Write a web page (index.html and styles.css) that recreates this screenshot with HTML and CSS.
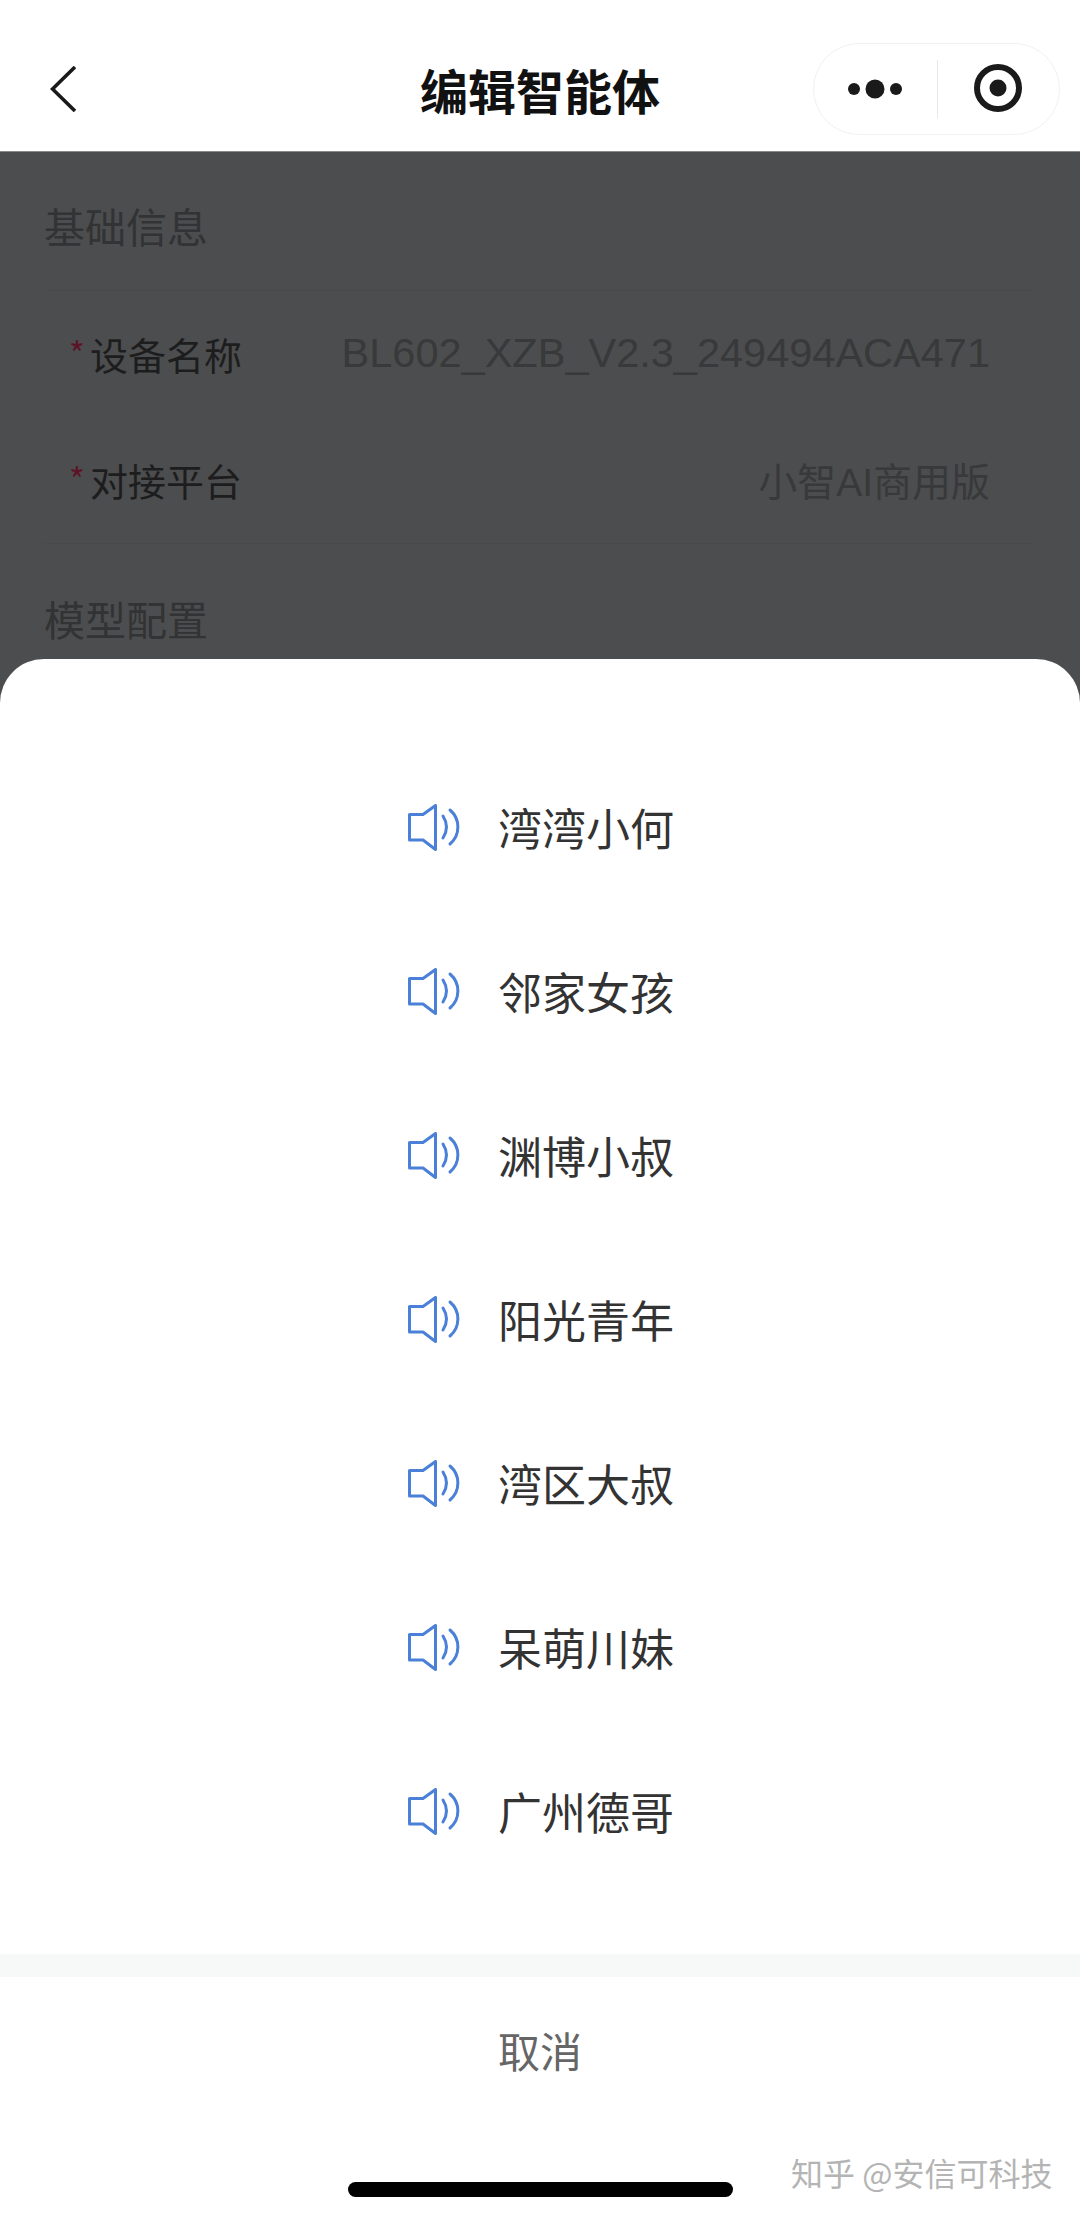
FILE: index.html
```html
<!DOCTYPE html>
<html>
  <head>
    <meta charset="utf-8">
    <title>编辑智能体</title>
    <link rel="stylesheet" href="styles.css">
  </head>
  <body>
    <div class="page">
      <header class="navbar">
        <svg class="back" width="26" height="46" viewBox="0 0 26 46">
          <path d="M25 1 L2.5 23 L25 45" fill="none" stroke="#1a1a1a" stroke-width="3.6"/>
        </svg>
        <div class="title">编辑智能体</div>
        <div class="capsule">
          <svg class="capsule-btn" width="123" height="90" viewBox="0 0 123 90">
            <circle cx="40" cy="45" r="6" fill="#1a1a1a"/>
            <circle cx="61" cy="45" r="9.5" fill="#1a1a1a"/>
            <circle cx="82" cy="45" r="6" fill="#1a1a1a"/>
          </svg>
          <div class="capsule-line"></div>
          <svg class="capsule-btn" width="121" height="90" viewBox="0 0 121 90">
            <circle cx="60" cy="44" r="21" fill="none" stroke="#1a1a1a" stroke-width="6"/>
            <circle cx="60" cy="44" r="8.5" fill="#1a1a1a"/>
          </svg>
        </div>
      </header>

      <main class="form">
        <div class="section-title">基础信息</div>
        <div class="card">
          <div class="row">
            <span class="star">*</span><span class="label">设备名称</span>
            <span class="value device-id">BL602_XZB_V2.3_249494ACA471</span>
          </div>
          <div class="row">
            <span class="star">*</span><span class="label">对接平台</span>
            <span class="value">小智AI商用版</span>
          </div>
        </div>
        <div class="section-title second">模型配置</div>
      </main>

      <section class="sheet">
        <ul class="voices">
          <li class="voice">
            <svg class="speaker" width="52" height="47" viewBox="0 0 52 47"><use href="#speaker"/></svg>
            <span>湾湾小何</span>
          </li>
          <li class="voice">
            <svg class="speaker" width="52" height="47" viewBox="0 0 52 47"><use href="#speaker"/></svg>
            <span>邻家女孩</span>
          </li>
          <li class="voice">
            <svg class="speaker" width="52" height="47" viewBox="0 0 52 47"><use href="#speaker"/></svg>
            <span>渊博小叔</span>
          </li>
          <li class="voice">
            <svg class="speaker" width="52" height="47" viewBox="0 0 52 47"><use href="#speaker"/></svg>
            <span>阳光青年</span>
          </li>
          <li class="voice">
            <svg class="speaker" width="52" height="47" viewBox="0 0 52 47"><use href="#speaker"/></svg>
            <span>湾区大叔</span>
          </li>
          <li class="voice">
            <svg class="speaker" width="52" height="47" viewBox="0 0 52 47"><use href="#speaker"/></svg>
            <span>呆萌川妹</span>
          </li>
          <li class="voice">
            <svg class="speaker" width="52" height="47" viewBox="0 0 52 47"><use href="#speaker"/></svg>
            <span>广州德哥</span>
          </li>
        </ul>
        <div class="band"></div>
        <div class="cancel">取消</div>
      </section>

      <div class="homebar"></div>
      <div class="watermark">知乎 @安信可科技</div>
    </div>

    <svg width="0" height="0" class="defs">
      <defs>
        <g id="speaker" fill="none" stroke="#4a80d8" stroke-width="3" stroke-linejoin="round" stroke-linecap="round">
          <path d="M1.5 10.5 H15 L27.5 1.5 V45.5 L15 36 H1.5 Z"/>
          <path d="M35 12 Q42 23 35 34"/>
          <path d="M42 6 C52.5 15 52.5 31 42 40"/>
        </g>
      </defs>
    </svg>
  </body>
</html>
```

FILE: styles.css
```css
html, body {
  margin: 0;
  padding: 0;
  font-family: "Noto Sans CJK SC", "Noto Sans", sans-serif;
}

.page {
  position: relative;
  display: flex;
  flex-direction: column;
  width: 1080px;
  height: 2220px;
  overflow: hidden;
  background: #4c4d4e;
}

.navbar {
  position: relative;
  display: flex;
  align-items: center;
  justify-content: center;
  height: 152px;
  padding-top: 26px;
  box-sizing: border-box;
  background: #fff;
  border-bottom: 1px solid #8a8a8a;
}

.back {
  position: absolute;
  left: 50px;
  top: 66px;
}

.title {
  font-size: 48px;
  font-weight: 700;
  color: #111;
  line-height: 60px;
}

.capsule {
  position: absolute;
  left: 813px;
  top: 43px;
  display: flex;
  align-items: center;
  width: 247px;
  height: 92px;
  box-sizing: border-box;
  border: 1px solid #f1f1f1;
  border-radius: 46px;
}

.capsule-btn {
  flex: none;
}

.capsule-line {
  width: 1px;
  height: 58px;
  background: #e8e8e8;
}

.form {
  padding: 47px 45px 0 44px;
}

.section-title {
  font-size: 41px;
  line-height: 52px;
  color: #323334;
}

.second {
  margin-top: 48px;
}

.card {
  margin-top: 39px;
  border-top: 1px solid #494b49;
  border-bottom: 1px solid #494b49;
}

.row {
  display: flex;
  align-items: center;
  height: 126px;
  padding: 0 45px 2px 25px;
  box-sizing: border-box;
}

.star {
  width: 21px;
  font-size: 34px;
  line-height: 34px;
  color: #5c1428;
}

.label {
  font-size: 38px;
  color: #1d1d1e;
}

.value {
  margin-left: auto;
  font-family: "Liberation Sans", "Noto Sans CJK SC", sans-serif;
  font-size: 39px;
  color: #38393a;
}

.device-id {
  font-size: 41.5px;
}

.sheet {
  position: absolute;
  left: 0;
  right: 0;
  top: 659px;
  bottom: 0;
  background: #fff;
  border-radius: 44px 44px 0 0;
}

.voices {
  list-style: none;
  margin: 0;
  padding: 86px 0 0;
  height: 1208px;
  box-sizing: border-box;
}

.voice {
  display: flex;
  align-items: center;
  height: 164px;
  padding-left: 408px;
  font-size: 44px;
  color: #333;
}

.speaker {
  flex: none;
  margin-right: 38px;
}

.band {
  height: 23px;
  margin-top: 87px;
  background: #f7f8f8;
}

.cancel {
  margin-top: 43px;
  text-align: center;
  font-size: 42px;
  line-height: 60px;
  color: #666;
}

.homebar {
  position: absolute;
  left: 348px;
  top: 2182px;
  width: 385px;
  height: 15px;
  border-radius: 8px;
  background: #000;
}

.watermark {
  position: absolute;
  left: 791px;
  top: 2151px;
  font-size: 32px;
  line-height: 42px;
  color: #b4b4b4;
  white-space: nowrap;
}

.defs {
  position: absolute;
}
```
